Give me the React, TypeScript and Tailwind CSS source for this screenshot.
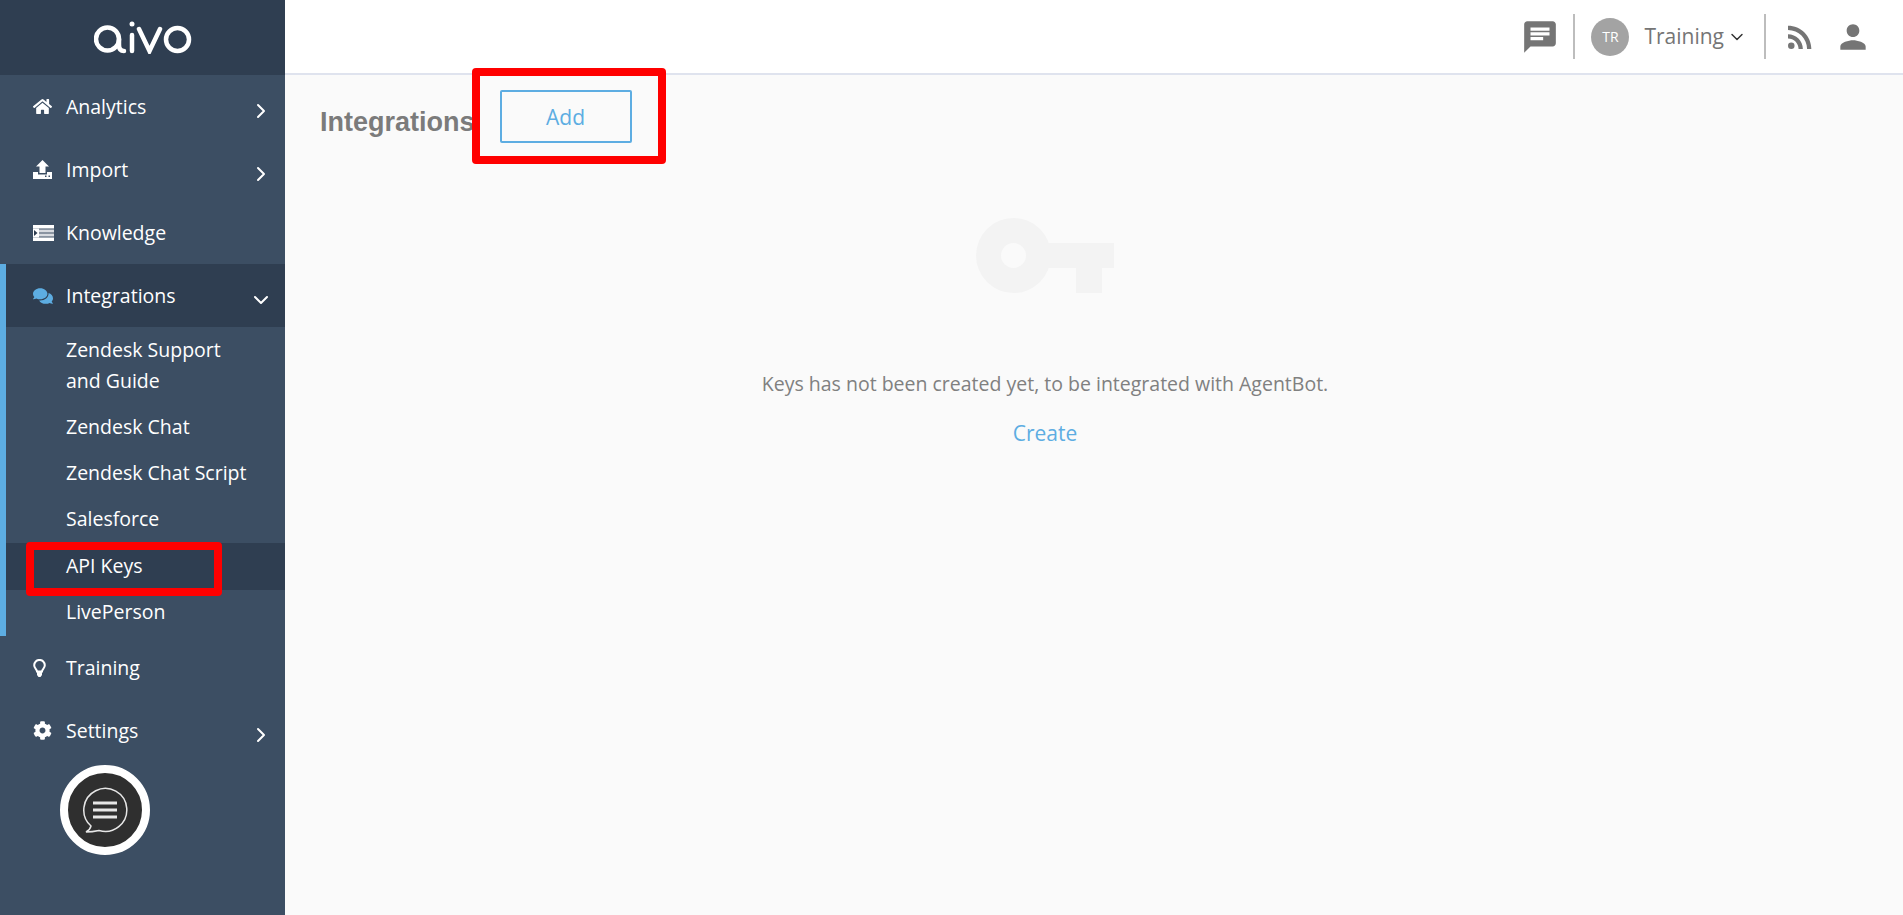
import { FaHome, FaComments, FaCog } from "react-icons/fa";
import { MdChat, MdRssFeed, MdPerson } from "react-icons/md";
import { ChevronDown, ChevronRight } from "lucide-react";
import type { ReactNode } from "react";

function Logo() {
  return (
    <svg width="98" height="34" viewBox="0 0 98 34" fill="none" stroke="#fff" strokeWidth="4.500" strokeLinecap="round">
      <circle cx="13.500" cy="19" r="11.500" />
      <path d="M25 19v6q0 6 5 6" />
      <path d="M38 15v16" />
      <circle cx="38" cy="4" r="2.500" fill="#fff" stroke="none" />
      <path d="M45 9l10.500 22L66 9" />
      <circle cx="83.500" cy="19.500" r="11.500" />
    </svg>
  );
}

function ImportIcon() {
  return (
    <svg width="19" height="19" viewBox="0 0 19 19" fill="#fff">
      <path d="M9.500 0L16 6.500h-3.500V13h-6V6.500H3z" />
      <path d="M0 12h5v2.500h9V12h5v7H0z" />
      <path d="M12 15.500h1.500V17H12zM15.500 15.500H17V17h-1.500z" fill="#3c4e63" />
    </svg>
  );
}

function KnowledgeIcon() {
  return (
    <svg width="21" height="16" viewBox="0 0 21 16" fill="#fff">
      <path d="M0 0h21v3.500H0zM0 12.500h21V16H0z" />
      <path d="M6 4.500h15v3H6zM6 8.500h15v3H6z" opacity="0.8" />
      <path d="M0 3.500h6v9H0z" />
      <path d="M1 5l3.500 3L1 11z" fill="#2f3e51" />
    </svg>
  );
}

function BulbIcon() {
  return (
    <svg width="13" height="18" viewBox="0 0 13 18" fill="none" stroke="#fff">
      <path d="M4 12.500c0-2-2.800-3-2.800-6.300a5.300 5.300 0 0 1 10.600 0c0 3.300-2.800 4.300-2.800 6.300z" strokeWidth="2" />
      <path d="M4 12.500h5V16l-1.500 2h-2L4 16z" fill="#fff" stroke="none" />
    </svg>
  );
}

function MainRow({ icon, label, arrow, active }: { icon: ReactNode; label: string; arrow?: "right" | "down"; active?: boolean }) {
  return (
    <div className={`flex h-[63px] items-center pr-3 text-white ${active ? "bg-[#2f3e51] pl-[27px]" : "pl-[33px]"}`}>
      <span className="flex w-[33px] shrink-0 items-center">{icon}</span>
      <span className="flex-1">{label}</span>
      {arrow === "right" && <ChevronRight className="mt-2 h-6 w-6 text-white" strokeWidth={2} />}
      {arrow === "down" && <ChevronDown className="mt-2 h-6 w-6 text-white" strokeWidth={2} />}
    </div>
  );
}

const subItems = ["Zendesk Chat", "Zendesk Chat Script", "Salesforce"];

export default function App() {
  return (
    <div className="relative flex h-[915px] w-full overflow-hidden bg-[#fafafa] font-['Open_Sans',sans-serif] text-[19.5px]">
      {/* Sidebar */}
      <aside className="relative flex w-[285px] shrink-0 flex-col bg-[#3c4e63]">
        <div className="flex h-[75px] items-center justify-center bg-[#2f3e51] pb-[1px]">
          <Logo />
        </div>
        <MainRow icon={<FaHome size={19} color="#fff" />} label="Analytics" arrow="right" />
        <MainRow icon={<ImportIcon />} label="Import" arrow="right" />
        <MainRow icon={<KnowledgeIcon />} label="Knowledge" />
        <div className="border-l-[6px] border-[#5dade2]">
          <MainRow icon={<FaComments size={20} color="#5dade2" />} label="Integrations" arrow="down" active />
          <div className="pl-[60px] leading-[31px] text-white">
            <div className="h-[78px] pt-[7px]">
              Zendesk Support
              <br />
              and Guide
            </div>
            {subItems.map((item) => (
              <div key={item} className="flex h-[46px] items-center pb-1">
                {item}
              </div>
            ))}
          </div>
          <div className="flex h-[47px] items-center bg-[#2f3e51] pb-[1px] pl-[60px] text-white">API Keys</div>
          <div className="flex h-[46px] items-center pb-[2px] pl-[60px] text-white">LivePerson</div>
        </div>
        <MainRow icon={<BulbIcon />} label="Training" />
        <MainRow icon={<FaCog size={19} color="#fff" />} label="Settings" arrow="right" />

        {/* chat widget */}
        <div className="absolute left-[60px] top-[765px] flex h-[90px] w-[90px] items-center justify-center rounded-full border-8 border-white bg-[#2f2f2f]">
          <svg width="48" height="48" viewBox="0 0 48 48" fill="none" stroke="#e6e6e6">
            <path d="M10 40A21.500 21.500 0 1 1 18 44.500Q11 46 5 46Q9 44 10 40z" strokeWidth="1.500" />
            <path d="M12 17h24M12 24h24M12 31h24" strokeWidth="3" />
          </svg>
        </div>
      </aside>

      {/* Main */}
      <div className="flex min-w-0 flex-1 flex-col">
        <header className="flex h-[75px] shrink-0 items-center justify-end border-b-2 border-[#dfe3ee] bg-white">
          <MdChat size={38} color="#757575" className="mr-[14px]" />
          <div className="h-[45px] w-[2px] bg-[#bdbdbd]" />
          <div className="ml-[16px] flex h-[38px] w-[38px] items-center justify-center rounded-full bg-[#a3a3a3] text-[14px] text-white">TR</div>
          <span className="ml-[15px] text-[21px] text-[#757575]">Training</span>
          <ChevronDown className="ml-[3px] h-[20px] w-[20px] text-[#333]" strokeWidth={1.750} />
          <div className="ml-[17px] h-[45px] w-[2px] bg-[#bdbdbd]" />
          <MdRssFeed size={36} color="#757575" className="ml-[16px]" />
          <MdPerson size={38} color="#757575" className="ml-[16px] mr-[31px]" />
        </header>
        <main className="flex flex-1 flex-col">
          <div className="flex items-center pl-[35px] pt-[15px]">
            <h1 className="mt-[12px] font-['Liberation_Sans',sans-serif] text-[27px] font-bold text-[#7b7b7b]">Integrations</h1>
            <button className="ml-[25px] flex h-[53px] w-[132px] items-center justify-center rounded-[2px] border-2 border-[#5dade2] pt-[2px] text-[21px] text-[#5dade2]">Add</button>
          </div>
          <div className="flex flex-col items-center pr-[98px] pt-[75px]">
            <svg width="138" height="75" viewBox="0 0 138 75" fill="#f3f3f3">
              <path fillRule="evenodd" d="M0 37.500a37.500 37.500 0 1 0 75 0a37.500 37.500 0 1 0-75 0zM25 37.500a12.500 12.500 0 1 1 25 0a12.500 12.500 0 1 1-25 0z" />
              <path d="M66 25h72v25h-12v25h-26V50H66z" />
            </svg>
            <p className="mt-[76px] text-[#808080]">Keys has not been created yet, to be integrated with AgentBot.</p>
            <a className="mt-[20px] text-[21px] text-[#5dade2]">Create</a>
          </div>
        </main>
      </div>

      {/* Red annotation boxes */}
      <div className="absolute left-[26px] top-[542px] h-[54px] w-[196px] rounded-[4px] border-8 border-[#ff0000]" />
      <div className="absolute left-[472px] top-[68px] h-[96px] w-[194px] rounded-[4px] border-8 border-[#ff0000]" />
    </div>
  );
}
